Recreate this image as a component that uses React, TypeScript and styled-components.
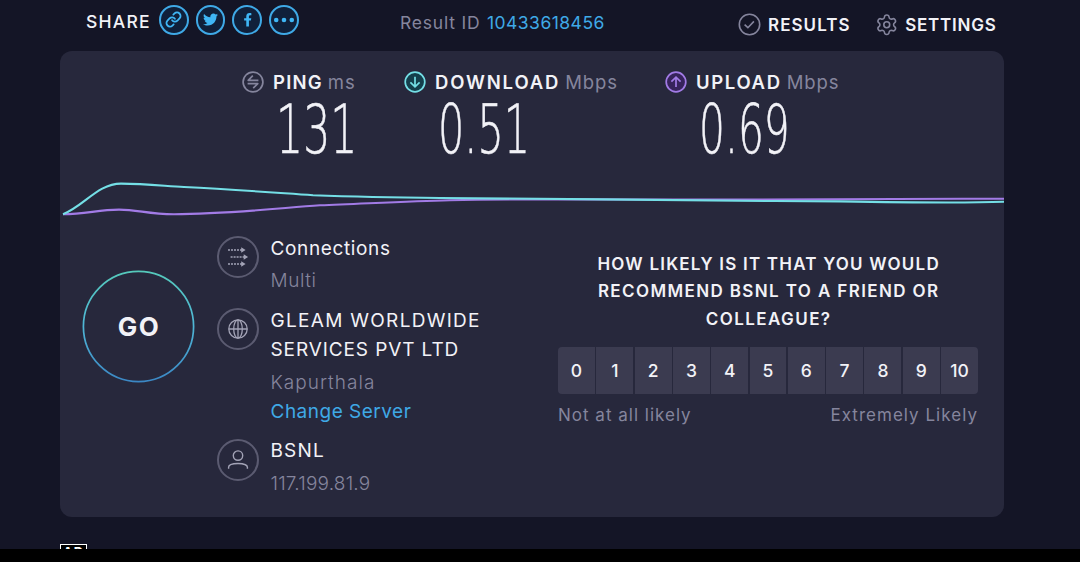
import styled, { createGlobalStyle } from "styled-components";
import { Link, Settings } from "lucide-react";
import { FaFacebookF, FaTwitter } from "react-icons/fa";

const colors = {
  page: '#141526',
  panel: '#27283c',
  cell: '#3b3b50',
  text: '#f2f2f7',
  muted: '#85859d',
  outline: '#5b5b71',
  blue: '#3fa9e6',
  cyan: '#74dfe6',
  purple: '#a27be6',
}

const GlobalStyle = createGlobalStyle`
  body {
    margin: 0;
    background: #000;
    color: ${colors.text};
    font-family: Inter, "Liberation Sans", sans-serif;
  }

  svg {
    display: block;
    flex: none;
  }
`

const Layout = {
  Page: styled.div`
    box-sizing: border-box;
    width: 1080px;
    height: 549px;
    overflow: hidden;
    background: ${colors.page};
  `,
  Header: styled.header`
    display: grid;
    grid-template-columns: 314px 338px 1fr;
    height: 51px;
    padding-left: 86px;
    box-sizing: border-box;
  `,
  Panel: styled.main`
    box-sizing: border-box;
    width: 944px;
    height: 466px;
    margin-left: 60px;
    border-radius: 12px;
    background: ${colors.panel};
  `,
  Metrics: styled.section`
    display: grid;
    grid-template-columns: 162px 261px 1fr;
    box-sizing: border-box;
    height: 114px;
    padding: 19.5px 0 0 182px;
  `,
  Details: styled.section`
    display: grid;
    grid-template-columns: 134px 318px 420px;
    padding-left: 23px;
  `,
}

const Label = styled.span<{ $spacing?: number; $weight?: number; $size?: number; $color?: string }>`
  color: ${({ $color }) => $color || colors.text};
  font-size: ${({ $size }) => $size || 17.5}px;
  font-weight: ${({ $weight }) => $weight || 400};
  letter-spacing: ${({ $spacing }) => $spacing || 0}px;
  line-height: 22px;
  white-space: nowrap;
`

const Share = {
  Wrapper: styled.div`
    display: flex;
    align-items: center;
    height: 40px;
    gap: 8px;
  `,
  Title: styled(Label)`
    padding-top: 4px;
  `,
  Buttons: styled.div`
    display: flex;
    gap: 7px;
  `,
  Button: styled.button`
    display: flex;
    align-items: center;
    justify-content: center;
    box-sizing: border-box;
    width: 29.8px;
    height: 29.8px;
    padding: 0;
    border: 2px solid ${colors.blue};
    border-radius: 50%;
    background: #10203a;
    color: #3fb6f5;
  `,
}

const ResultId = styled.div`
  display: flex;
  height: 45px;
  align-items: center;
  gap: 6.5px;
`

const Nav = {
  Wrapper: styled.nav`
    display: flex;
    align-items: center;
    height: 49px;
    gap: 24px;
  `,
  Item: styled.a`
    display: flex;
    align-items: center;
    gap: 7px;
    color: ${colors.muted};
  `,
}

const Metric = {
  Wrapper: styled.div`
    display: flex;
    flex-direction: column;
  `,
  Title: styled.div<{ $color: string }>`
    display: flex;
    align-items: center;
    color: ${({ $color }) => $color};

    svg {
      margin-right: 9px;
    }
  `,
  Unit: styled(Label)`
    margin-left: 5px;
  `,
  Value: styled.div<{ $scale: number }>`
    align-self: flex-start;
    margin: 7.5px 0 0 33.5px;
    font-family: "DejaVu Sans", sans-serif;
    font-size: 67.5px;
    font-weight: 200;
    line-height: 60px;
    -webkit-text-stroke: 0.6px ${colors.text};
    transform: scaleX(${({ $scale }) => $scale});
    transform-origin: left center;
  `,
}

const Go = {
  Button: styled.button`
    position: relative;
    width: 113px;
    height: 113px;
    margin-top: 44.5px;
    margin-left: -1px;
    padding: 0;
    border: 0;
    background: none;
    font-family: inherit;

    svg {
      position: absolute;
      inset: 0;
    }
  `,
  Text: styled(Label)`
    display: block;
    padding: 1px 0 0 1px;
  `,
}

const Info = {
  List: styled.div`
    display: flex;
    flex-direction: column;
    gap: 10px;
    padding-top: 8.7px;
  `,
  Row: styled.div`
    display: flex;
    gap: 11.5px;
  `,
  Icon: styled.div`
    display: flex;
    align-items: center;
    justify-content: center;
    flex: none;
    box-sizing: border-box;
    width: 42px;
    height: 42px;
    margin-top: 2.7px;
    border: 2px solid ${colors.outline};
    border-radius: 50%;
    color: #a3a3b6;
  `,
  Lines: styled.div`
    display: flex;
    flex-direction: column;
  `,
  Primary: styled(Label)`
    line-height: 29.2px;
  `,
  Secondary: styled(Label)`
    margin-top: 3.5px;
    line-height: 29.2px;
  `,
  Action: styled(Label)`
    line-height: 29.2px;
  `,
}

const Survey = {
  Wrapper: styled.div`
    display: flex;
    flex-direction: column;
    padding: 26px 0 0 23px;
    width: 420px;
  `,
  Question: styled.h2`
    display: flex;
    flex-direction: column;
    align-items: center;
    margin: 0 0 14.3px;
    padding-left: 1.4px;
  `,
  Line: styled(Label)`
    line-height: 27.3px;
  `,
  Scale: styled.div`
    display: grid;
    grid-template-columns: repeat(11, 1fr);
    gap: 1.4px;
    height: 46.5px;
    border-radius: 4px;
    overflow: hidden;
  `,
  Cell: styled.button`
    padding: 0;
    border: 0;
    background: ${colors.cell};
    color: ${colors.text};
    font-family: inherit;
    font-size: 17.5px;
    font-weight: 500;
  `,
  Legend: styled.div`
    display: flex;
    justify-content: space-between;
    margin-top: 10.5px;
  `,
}

const Ad = styled.div`
  box-sizing: border-box;
  width: 27px;
  height: 18px;
  margin: 27px 0 0 60px;
  border: 1px solid #fff;
  background: #000;
  color: #fff;
  font-size: 13px;
  font-weight: 700;
  line-height: 15px;
  letter-spacing: 1px;
  text-align: center;
`

const DotsIcon = () => (
  <svg width="22" height="6" viewBox="0 0 22 6" fill="currentColor">
    <circle cx="3.2" cy="3" r="2.3" />
    <circle cx="11" cy="3" r="2.3" />
    <circle cx="18.8" cy="3" r="2.3" />
  </svg>
)

const CheckIcon = () => (
  <svg width="23" height="23" viewBox="0 0 23 23" fill="none" stroke="currentColor" strokeWidth="1.6">
    <circle cx="11.5" cy="11.5" r="10.2" />
    <path d="M6.6 11.6l3.3 3.1 6-6.3" />
  </svg>
)

const PingIcon = () => (
  <svg width="22" height="22" viewBox="0 0 22 22" fill="none" stroke="currentColor" strokeWidth="1.7">
    <circle cx="11" cy="11" r="9.9" />
    <path d="M16.4 9.3H6.2l4.6-4.6M5.6 12.6h10.2l-4.6 4.6" strokeLinejoin="round" />
  </svg>
)

const ArrowIcon = ({ up }: { up?: boolean }) => (
  <svg width="22" height="22" viewBox="0 0 22 22" fill="none" stroke="currentColor" strokeWidth="1.7">
    <circle cx="11" cy="11" r="9.8" fill={up ? '#37235c' : '#143f4c'} />
    <path d={up ? 'M11 16V6.4M6.4 10.6L11 6.2l4.6 4.4' : 'M11 5.8v9.8M6.4 11.4l4.6 4.4 4.6-4.4'} />
  </svg>
)

const ConnectionsIcon = () => (
  <svg width="22" height="20" viewBox="0 0 22 20" fill="none" stroke="currentColor" strokeWidth="1.3">
    <path d="M1 3h14M3.6 10h14M1 17h14" strokeDasharray="2 1" />
    <path d="M14.2 .2v5.6L18.6 3zM16.7 7.2v5.6l4.4-2.8zM14.2 14.2v5.6l4.4-2.8z" fill="currentColor" stroke="none" />
  </svg>
)

const GlobeIcon = () => (
  <svg width="22" height="22" viewBox="0 0 22 22" fill="none" stroke="currentColor" strokeWidth="1.3">
    <circle cx="11" cy="11" r="9.2" />
    <ellipse cx="11" cy="11" rx="4.3" ry="9.2" />
    <path d="M11 1.8v18.4M1.8 11h18.4" />
  </svg>
)

const UserIcon = () => (
  <svg width="22" height="22" viewBox="0 0 22 22" fill="none" stroke="currentColor" strokeWidth="1.4">
    <circle cx="11" cy="6.6" r="4.7" />
    <path d="M1.6 19.8v-1.5c0-2.3 3.6-3.8 9.4-3.8s9.4 1.5 9.4 3.8v1.5" />
  </svg>
)

const SpeedChart = () => (
  <svg width="944" height="60" viewBox="60 165 944 60" fill="none" strokeWidth="2.1">
    <path
      stroke={colors.purple}
      d="M63 214.3C86 214.3 98 209.6 119 209.6C138 209.6 148 214.2 174 214.2C225 214.2 275 208.6 320 205.3C365 203.6 410 201 450 200.2C540 198.6 620 199.8 740 199.6C840 199 920 198.8 1004 198.8"
    />
    <path
      stroke={colors.cyan}
      d="M63 214.3C84 206 98 183.6 121 183.6C145 183.8 165 186 184 187C235 189.6 270 192.3 313 195.2C345 196.4 400 197.6 440 198C500 198.2 560 198.6 630 199.6C720 200.6 770 201.2 840 201.4C900 202.4 960 203.2 1004 201.8"
    />
  </svg>
)

const metrics = [
  { name: 'PING', unit: 'ms', value: '131', scale: 0.632, spacing: 1.2, unitSpacing: 1, color: colors.muted, icon: <PingIcon /> },
  { name: 'DOWNLOAD', unit: 'Mbps', value: '0.51', scale: 0.612, spacing: 1.85, unitSpacing: 0.88, color: colors.cyan, icon: <ArrowIcon /> },
  { name: 'UPLOAD', unit: 'Mbps', value: '0.69', scale: 0.604, spacing: 1.65, unitSpacing: 0.88, color: colors.purple, icon: <ArrowIcon up /> },
]

const question = [
  { text: 'HOW LIKELY IS IT THAT YOU WOULD', spacing: 1.21 },
  { text: 'RECOMMEND BSNL TO A FRIEND OR', spacing: 1.38 },
  { text: 'COLLEAGUE?', spacing: 1.41 },
]

const scores = Array.from({ length: 11 }, (_, index) => index)

export default function App() {
  return (
    <>
      <GlobalStyle />
      <Layout.Page>
        <Layout.Header>
          <Share.Wrapper>
            <Share.Title $weight={500} $spacing={1.23}>SHARE</Share.Title>
            <Share.Buttons>
              <Share.Button><Link size={17} strokeWidth={2.5} /></Share.Button>
              <Share.Button><FaTwitter size={15} /></Share.Button>
              <Share.Button><FaFacebookF size={13.5} /></Share.Button>
              <Share.Button><DotsIcon /></Share.Button>
            </Share.Buttons>
          </Share.Wrapper>
          <ResultId>
            <Label $spacing={0.8} $color={colors.muted}>Result ID</Label>
            <Label $spacing={0.47} $color={colors.blue}>10433618456</Label>
          </ResultId>
          <Nav.Wrapper>
            <Nav.Item>
              <CheckIcon />
              <Label $size={17} $weight={600} $spacing={1.05}>RESULTS</Label>
            </Nav.Item>
            <Nav.Item>
              <Settings size={23.5} strokeWidth={1.6} />
              <Label $size={17} $weight={600} $spacing={0.77}>SETTINGS</Label>
            </Nav.Item>
          </Nav.Wrapper>
        </Layout.Header>

        <Layout.Panel>
          <Layout.Metrics>
            {
              metrics.map((metric) => (
                <Metric.Wrapper key={metric.name}>
                  <Metric.Title $color={metric.color}>
                    {metric.icon}
                    <Label $size={18.5} $weight={600} $spacing={metric.spacing}>{metric.name}</Label>
                    <Metric.Unit $size={18.5} $spacing={metric.unitSpacing} $color={colors.muted}>{metric.unit}</Metric.Unit>
                  </Metric.Title>
                  <Metric.Value $scale={metric.scale}>{metric.value}</Metric.Value>
                </Metric.Wrapper>
              ))
            }
          </Layout.Metrics>

          <SpeedChart />

          <Layout.Details>
            <Go.Button>
              <svg width="113" height="113" viewBox="0 0 113 113" fill="none">
                <defs>
                  <linearGradient id="ring" x1="0" y1="0" x2="0" y2="1">
                    <stop offset="0" stopColor="#55c9bb" />
                    <stop offset="0.5" stopColor="#4fb6d6" />
                    <stop offset="1" stopColor="#3b87c4" />
                  </linearGradient>
                </defs>
                <circle cx="56.5" cy="56.5" r="55.1" stroke="url(#ring)" strokeWidth="1.7" />
              </svg>
              <Go.Text $size={26} $weight={700} $spacing={1.5}>GO</Go.Text>
            </Go.Button>

            <Info.List>
              <Info.Row>
                <Info.Icon><ConnectionsIcon /></Info.Icon>
                <Info.Lines>
                  <Info.Primary $size={19} $spacing={0.64}>Connections</Info.Primary>
                  <Info.Secondary $size={19} $weight={300} $spacing={0.56} $color={colors.muted}>Multi</Info.Secondary>
                </Info.Lines>
              </Info.Row>
              <Info.Row>
                <Info.Icon><GlobeIcon /></Info.Icon>
                <Info.Lines>
                  <Info.Primary $size={19} $spacing={1.3}>GLEAM WORLDWIDE</Info.Primary>
                  <Info.Primary $size={19} $spacing={0.9}>SERVICES PVT LTD</Info.Primary>
                  <Info.Secondary $size={19} $weight={300} $spacing={1.02} $color={colors.muted}>Kapurthala</Info.Secondary>
                  <Info.Action $size={19} $spacing={0.5} $color={colors.blue}>Change Server</Info.Action>
                </Info.Lines>
              </Info.Row>
              <Info.Row>
                <Info.Icon><UserIcon /></Info.Icon>
                <Info.Lines>
                  <Info.Primary $size={19} $spacing={1.19}>BSNL</Info.Primary>
                  <Info.Secondary $size={19} $weight={300} $spacing={0.2} $color={colors.muted}>117.199.81.9</Info.Secondary>
                </Info.Lines>
              </Info.Row>
            </Info.List>

            <Survey.Wrapper>
              <Survey.Question>
                {
                  question.map((line) => (
                    <Survey.Line key={line.text} $size={17} $weight={600} $spacing={line.spacing}>{line.text}</Survey.Line>
                  ))
                }
              </Survey.Question>
              <Survey.Scale>
                {scores.map((score) => <Survey.Cell key={score}>{score}</Survey.Cell>)}
              </Survey.Scale>
              <Survey.Legend>
                <Label $size={17} $spacing={1} $color={colors.muted}>Not at all likely</Label>
                <Label $size={17} $spacing={1.03} $color={colors.muted}>Extremely Likely</Label>
              </Survey.Legend>
            </Survey.Wrapper>
          </Layout.Details>
        </Layout.Panel>
        <Ad>AD</Ad>
      </Layout.Page>
    </>
  )
}
